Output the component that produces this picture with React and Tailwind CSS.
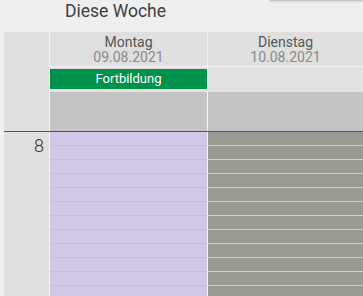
import React from "react";

const slots = Array.from({ length: 12 });

export default function App() {
  return (
    <div
      className="relative w-[363px] h-[296px] overflow-hidden bg-[#efefef]"
      style={{ fontFamily: "Roboto, 'Noto Sans', sans-serif" }}
    >
      <div className="absolute top-0 left-[269px] w-[94px] h-[1px] bg-[#c6c6c6] shadow-[0_1px_2px_rgba(0,0,0,0.15)]" />
      <div className="h-[32px] pl-[65px] pt-[0px] text-[17.5px] leading-[22px] text-[#404040]">
        Diese Woche
      </div>
      <div className="ml-[4px] flex flex-col">
        {/* header area */}
        <div className="flex h-[99px]">
          <div className="w-[45px] shrink-0 bg-[#e0e0e0]" />
          {[
            { d: "Montag", date: "09.08.2021", ev: true },
            { d: "Dienstag", date: "10.08.2021", ev: false },
          ].map((c, i) => (
            <div
              key={i}
              className={`flex flex-col border-l border-[#f4f4f4] ${i === 0 ? "w-[158px]" : "w-[156px]"} shrink-0`}
            >
              <div className="h-[34px] bg-[#e0e0e0] flex flex-col items-center pt-[3px]">
                <div className="text-[14px] leading-[15px] text-[#555]">{c.d}</div>
                <div className="text-[14px] leading-[15px] text-[#8a8a8a]">{c.date}</div>
              </div>
              <div className="h-[1px] bg-[#f4f4f4]" />
              <div className="h-[25px] bg-[#e2e2e2] pt-[2px]">
                {c.ev && (
                  <div className="h-[20px] bg-[#00914c] text-white text-[13px] leading-[20px] text-center">
                    Fortbildung
                  </div>
                )}
              </div>
              <div className="h-[39px] bg-[#c4c4c4]" />
            </div>
          ))}
        </div>
        <div className="h-[1px] bg-[#11774a]" />
        {/* body */}
        <div className="flex">
          <div className="w-[45px] shrink-0 bg-[#e0e0e0] h-[170px] flex justify-end pr-[5px]">
            <div className="text-[18px] font-light leading-none text-[#333] mt-[5px]">8</div>
          </div>
          <div className="w-[158px] shrink-0 border-l border-[#f4f4f4] bg-[#d0c8e6]">
            {slots.map((_, i) => (
              <div key={i} className="h-[14px] border-b border-[#c6bfd2]" />
            ))}
          </div>
          <div className="w-[156px] shrink-0 border-l border-[#f4f4f4] bg-[#9a9b92]">
            {slots.map((_, i) => (
              <div key={i} className="h-[14px] border-b border-[#cfcfc9]" />
            ))}
          </div>
        </div>
      </div>
    </div>
  );
}
